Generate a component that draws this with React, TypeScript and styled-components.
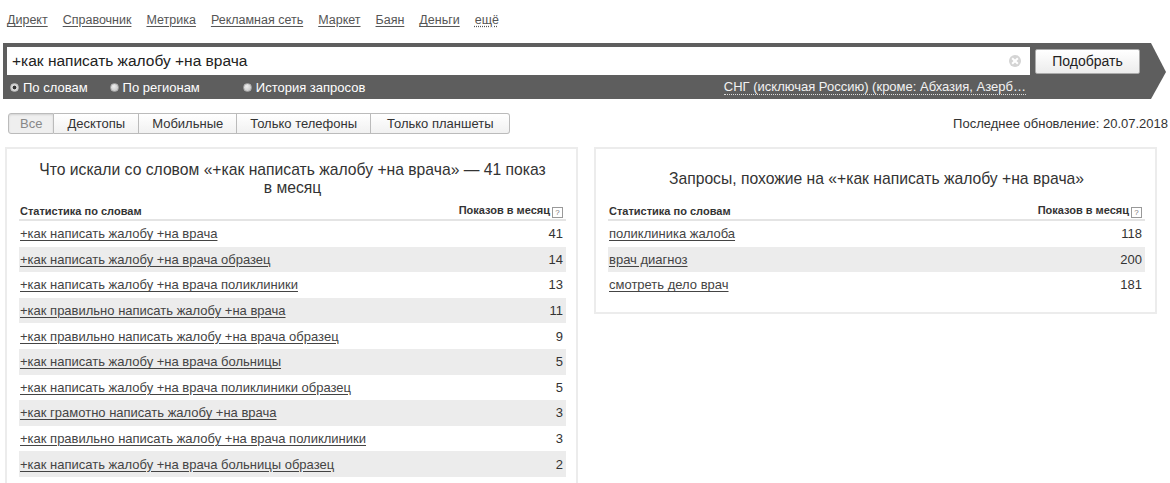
import styled, { createGlobalStyle } from "styled-components";

const GlobalStyle = createGlobalStyle`
  body {
    margin: 0;
    background: #fff;
    color: #333;
    font-family: "Liberation Sans", Arial, sans-serif;
  }
`;

const services = ["Директ", "Справочник", "Метрика", "Рекламная сеть", "Маркет", "Баян", "Деньги"];
const devices = ["Все", "Десктопы", "Мобильные", "Только телефоны", "Только планшеты"];

const phrases: [string, number][] = [
  ["+как написать жалобу +на врача", 41],
  ["+как написать жалобу +на врача образец", 14],
  ["+как написать жалобу +на врача поликлиники", 13],
  ["+как правильно написать жалобу +на врача", 11],
  ["+как правильно написать жалобу +на врача образец", 9],
  ["+как написать жалобу +на врача больницы", 5],
  ["+как написать жалобу +на врача поликлиники образец", 5],
  ["+как грамотно написать жалобу +на врача", 3],
  ["+как правильно написать жалобу +на врача поликлиники", 3],
  ["+как написать жалобу +на врача больницы образец", 2],
];

const similar: [string, number][] = [
  ["поликлиника жалоба", 118],
  ["врач диагноз", 200],
  ["смотреть дело врач", 181],
];

const Nav = styled.nav`
  display: flex;
  gap: 15px;
  height: 43px;
  box-sizing: border-box;
  padding: 13px 0 0 7px;
  font-size: 12.5px;
`;

const NavLink = styled.a<{ $dotted?: boolean }>`
  color: #555;
  text-decoration: underline;
  text-decoration-style: ${(p) => (p.$dotted ? "dotted" : "solid")};
  text-underline-offset: 2px;
`;

const SearchBand = styled.div`
  margin-left: 3px;
  width: 1163px;
  height: 56px;
  box-sizing: border-box;
  padding: 4px 0 0 4px;
  background: #5e5e5e;
  clip-path: polygon(0 0, calc(100% - 15px) 0, 100% 52%, calc(100% - 15px) 100%, 0 100%);
`;

const SearchRow = styled.div`
  display: flex;
  align-items: center;
  gap: 5px;
`;

const QueryBox = styled.div`
  position: relative;
  display: flex;
  align-items: center;
  width: 1023px;
  height: 28px;
  box-sizing: border-box;
  padding: 0 26px 0 5px;
  background: #fff;
  font-size: 15.5px;
  color: #222;
`;

const ClearIcon = styled.span`
  position: absolute;
  right: 9px;
  top: 8px;
  width: 12px;
  height: 12px;
  border-radius: 50%;
  background: #d4d4d4;
  &::before,
  &::after {
    content: "";
    position: absolute;
    left: 5px;
    top: 2px;
    width: 2px;
    height: 8px;
    background: #fff;
    transform: rotate(45deg);
  }
  &::after {
    transform: rotate(-45deg);
  }
`;

const PickButton = styled.button`
  width: 105px;
  height: 25px;
  border: 1px solid #aaa;
  border-radius: 2px;
  background: linear-gradient(#fff, #ececec);
  font-family: inherit;
  font-size: 14px;
  color: #222;
  padding: 0;
`;

const OptionsRow = styled.div`
  display: flex;
  align-items: center;
  height: 24px;
  width: 1023px;
  padding-left: 3px;
  box-sizing: border-box;
  font-size: 13px;
  color: #fff;
`;

const Radio = styled.span<{ $gap: number }>`
  display: flex;
  align-items: center;
  gap: 4px;
  margin-right: ${(p) => p.$gap}px;
`;

const RadioMark = styled.span<{ $on?: boolean }>`
  width: 9px;
  height: 9px;
  box-sizing: border-box;
  border-radius: 50%;
  background: ${(p) =>
    p.$on
      ? "radial-gradient(circle, #333 0 1.6px, #d8d8d8 2.2px)"
      : "radial-gradient(circle at 40% 35%, #eee, #bdbdbd)"};
  border: 1px solid ${(p) => (p.$on ? "#bbb" : "#aaa")};
`;

const RegionLink = styled.span`
  margin-left: auto;
  margin-right: 4px;
  color: #f2f2f2;
  border-bottom: 1px dotted #ddd;
  line-height: 14px;
`;

const Toolbar = styled.div`
  display: flex;
  align-items: center;
  justify-content: space-between;
  margin: 14px 2px 0 8px;
  height: 21px;
`;

const Tabs = styled.div`
  display: flex;
`;

const Tab = styled.button<{ $active?: boolean }>`
  height: 21px;
  padding: 0 13px;
  border: 1px solid #bbb;
  border-left-width: 0;
  background: ${(p) => (p.$active ? "#efefef" : "linear-gradient(#fff, #f1f1f1)")};
  box-shadow: ${(p) => (p.$active ? "inset 0 1px 2px rgba(0,0,0,0.12)" : "none")};
  color: ${(p) => (p.$active ? "#888" : "#333")};
  font-family: inherit;
  font-size: 13px;
  &:first-child {
    border-left-width: 1px;
    border-radius: 3px 0 0 3px;
    padding: 0 11px;
  }
  &:last-child {
    border-radius: 0 3px 3px 0;
    padding: 0 16px;
  }
`;

const Updated = styled.span`
  font-size: 13px;
  color: #333;
`;

const Columns = styled.div`
  display: flex;
  align-items: flex-start;
  gap: 16px;
  margin: 13px 0 0 5px;
`;

const Card = styled.section<{ $width: number }>`
  width: ${(p) => p.$width}px;
  box-sizing: border-box;
  padding: 11px 10px 14px 12px;
  border: 2px solid #ececec;
`;

const CardTitle = styled.h2`
  display: flex;
  align-items: center;
  justify-content: center;
  min-height: 38px;
  margin: 0 18px;
  font-size: 15.7px;
  font-weight: normal;
  line-height: 18px;
  text-align: center;
  color: #333;
`;

const HeadRow = styled.div`
  display: flex;
  justify-content: space-between;
  align-items: center;
  margin-top: 5px;
  height: 16px;
  padding: 0 3px 0 1px;
  border-bottom: 2px solid #e4e4e4;
  font-size: 11px;
  font-weight: bold;
  color: #333;
`;

const HelpMark = styled.span`
  display: inline-flex;
  align-items: center;
  justify-content: center;
  width: 9px;
  height: 9px;
  margin-left: 2px;
  border: 1px solid #999;
  font-size: 8px;
  font-weight: normal;
  color: #777;
  vertical-align: -1px;
`;

const Row = styled.div<{ $shaded: boolean }>`
  display: flex;
  justify-content: space-between;
  align-items: center;
  height: 25.6px;
  padding: 0 3px 0 1px;
  background: ${(p) => (p.$shaded ? "#ececec" : "transparent")};
  font-size: 13px;
`;

const PhraseLink = styled.a`
  color: #444;
  text-decoration: underline;
  text-underline-offset: 2px;
`;

const Count = styled.span`
  color: #333;
`;

function StatsTable({ rows }: { rows: [string, number][] }) {
  return (
    <div>
      <HeadRow>
        <span>Статистика по словам</span>
        <span>
          Показов в месяц<HelpMark>?</HelpMark>
        </span>
      </HeadRow>
      {rows.map(([text, count], i) => (
        <Row key={text} $shaded={i % 2 === 1}>
          <PhraseLink>{text}</PhraseLink>
          <Count>{count}</Count>
        </Row>
      ))}
    </div>
  );
}

export default function App() {
  return (
    <>
      <GlobalStyle />
      <Nav>
        {services.map((s) => (
          <NavLink key={s}>{s}</NavLink>
        ))}
        <NavLink $dotted>ещё</NavLink>
      </Nav>

      <SearchBand>
        <SearchRow>
          <QueryBox>
            +как написать жалобу +на врача
            <ClearIcon />
          </QueryBox>
          <PickButton>Подобрать</PickButton>
        </SearchRow>
        <OptionsRow>
          <Radio $gap={22}>
            <RadioMark $on />
            По словам
          </Radio>
          <Radio $gap={43}>
            <RadioMark />
            По регионам
          </Radio>
          <Radio $gap={0}>
            <RadioMark />
            История запросов
          </Radio>
          <RegionLink>СНГ (исключая Россию) (кроме: Абхазия, Азерб…</RegionLink>
        </OptionsRow>
      </SearchBand>

      <Toolbar>
        <Tabs>
          {devices.map((d, i) => (
            <Tab key={d} $active={i === 0}>
              {d}
            </Tab>
          ))}
        </Tabs>
        <Updated>Последнее обновление: 20.07.2018</Updated>
      </Toolbar>

      <Columns>
        <Card $width={573}>
          <CardTitle>Что искали со словом «+как написать жалобу +на врача» — 41 показ в месяц</CardTitle>
          <StatsTable rows={phrases} />
        </Card>
        <Card $width={563}>
          <CardTitle>Запросы, похожие на «+как написать жалобу +на врача»</CardTitle>
          <StatsTable rows={similar} />
        </Card>
      </Columns>
    </>
  );
}
